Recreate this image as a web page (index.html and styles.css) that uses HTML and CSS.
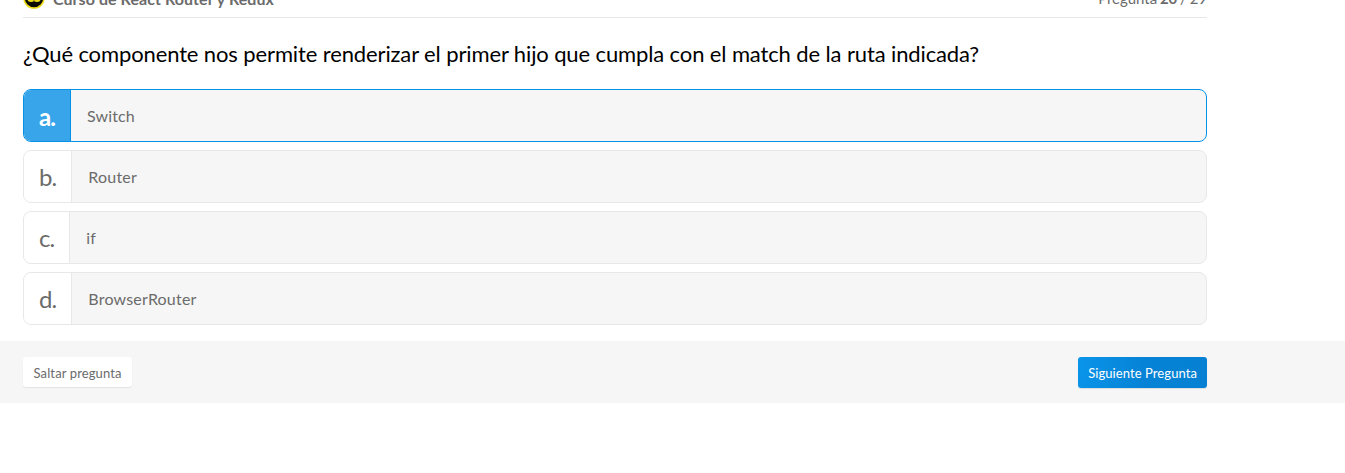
FILE: index.html
```html
<!DOCTYPE html>
<html lang="es">
<head>
<meta charset="utf-8">
<title>Curso de React Router y Redux</title>
<link rel="stylesheet" href="styles.css">
</head>
<body>
<main class="exam">
  <header class="exam-header">
    <div class="course">
      <svg class="course-badge" viewBox="0 0 22 22">
        <circle cx="11" cy="11" r="10" fill="#0b0b05" stroke="#eadb16" stroke-width="1.6"/>
        <path d="M4.5 10.5V13q.5 2 3.200 2t3.300-1q.6 1 3.300 1t3.200-2v-2.500z" fill="#eadb16"/>
        <path d="M7.500 10v2.500M11 10v3.500M14.500 10v2.500" fill="none" stroke="#0b0b05" stroke-width="1"/>
      </svg>
      <span class="course-name">Curso de React Router y Redux</span>
    </div>
    <span class="progress">Pregunta <b>20</b> / 29</span>
  </header>
  <h1 class="question">¿Qué componente nos permite renderizar el primer hijo que cumpla con el match de la ruta indicada?</h1>
  <ul class="answers">
    <li class="answer selected"><span class="letter">a.</span><span class="text">Switch</span></li>
    <li class="answer"><span class="letter">b.</span><span class="text">Router</span></li>
    <li class="answer"><span class="letter">c.</span><span class="text">if</span></li>
    <li class="answer"><span class="letter">d.</span><span class="text">BrowserRouter</span></li>
  </ul>
</main>
<footer class="actions">
  <div class="actions-inner">
    <button class="btn skip">Saltar pregunta</button>
    <button class="btn next">Siguiente Pregunta</button>
  </div>
</footer>
</body>
</html>
```
FILE: styles.css
```css
* { box-sizing: border-box; }
body {
  margin: 0;
  overflow: hidden;
  background: #fff;
  color: #6b6b6b;
  font-family: Lato, sans-serif;
  font-size: 16px;
}
.exam { width: 1184px; margin-left: 23px; }
.exam-header {
  display: flex;
  justify-content: space-between;
  align-items: center;
  height: 36px;
  margin-top: -18px;
  border-bottom: 1px solid #e8e8e8;
}
.course { display: flex; align-items: center; gap: 8px; }
.course-badge { width: 22px; height: 22px; margin-top: -3px; }
.course-name { font-weight: 700; line-height: 20px; margin-top: -2px; letter-spacing: .06px; }
.progress { font-size: 15px; line-height: 20px; margin-top: -4px; letter-spacing: -.03px; word-spacing: -1px; }
.question {
  height: 71px;
  margin: 0;
  padding-top: 20px;
  color: #000;
  font-size: 22px;
  font-weight: 400;
  line-height: 32px;
  letter-spacing: -.122px;
  white-space: nowrap;
}
.answers {
  display: grid;
  gap: 8px;
  margin: 0;
  padding: 0;
  list-style: none;
}
.answer {
  display: flex;
  height: 53px;
  overflow: hidden;
  border: 1px solid #e8e8e8;
  border-radius: 8px;
  background: #f6f6f6;
}
.letter {
  padding: 0 15px;
  border-right: 1px solid #e8e8e8;
  background: #fff;
  font-size: 24px;
  line-height: 51px;
  letter-spacing: -.9px;
}
.text { padding: 0 16px; line-height: 52px; letter-spacing: .2px; }
.selected { border-color: #0791e6; }
.selected .letter {
  border-color: #0791e6;
  background: #38a5ea;
  color: #fff;
  font-weight: 700;
  line-height: 53px;
}
.selected .text { letter-spacing: .1px; }
.actions {
  height: 62px;
  margin-top: 16px;
  padding-top: 16px;
  background: #f6f6f6;
}
.actions-inner {
  display: flex;
  justify-content: space-between;
  align-items: flex-start;
  width: 1184px;
  margin-left: 23px;
}
.btn {
  border: 0;
  border-radius: 3px;
  padding: 0 10px;
  height: 31px;
  font: 400 13px/32px Lato, sans-serif;
  letter-spacing: .12px;
  white-space: nowrap;
}
.skip {
  height: 30px;
  padding: 0 10.5px;
  background: #fff;
  color: #6b6b6b;
  box-shadow: 0 1px 1px rgba(0, 0, 0, .08);
}
.next {
  letter-spacing: .08px;
  background: linear-gradient(100deg, #0a95ea, #0683d6 50%, #0580d2);
  color: #fff;
  box-shadow: 0 1px 1px rgba(0, 0, 0, .1);
}
```
